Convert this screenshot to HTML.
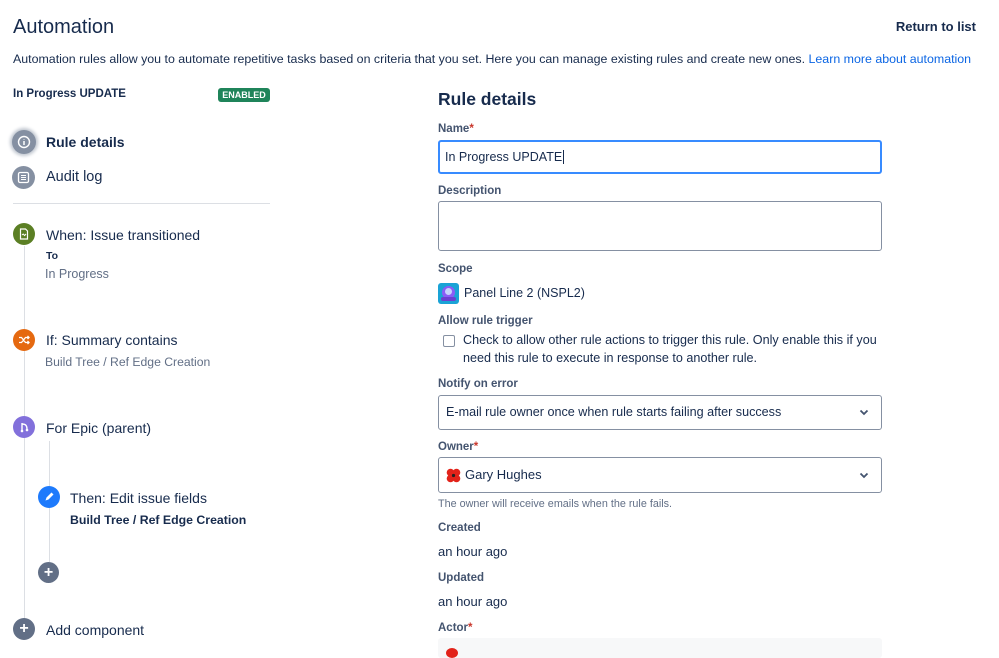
<!DOCTYPE html>
<html><head><meta charset="utf-8"><style>
*{margin:0;padding:0;box-sizing:border-box}
body{width:999px;height:652px;overflow:hidden;background:#fff;font-family:"Liberation Sans",sans-serif;color:#172b4d;position:relative}
.t{position:absolute;white-space:nowrap;line-height:20px}
.c{position:absolute;border-radius:50%;display:flex;align-items:center;justify-content:center}
.lbl{font-size:11.5px;font-weight:bold;color:#44546f}
.req{color:#c9372c}
.box{position:absolute;left:438px;width:444px;border:1px solid #8590a2;border-radius:3px;background:#fff}
.vl{position:absolute;width:1px;background:#dcdfe4}
</style></head><body>
<div class="t" style="left:13px;top:15px;font-size:20px;line-height:24px">Automation</div>
<div class="t" style="right:23px;top:17px;font-size:13px;font-weight:bold">Return to list</div>
<div class="t" style="left:13px;top:49px;font-size:12.4px">Automation rules allow you to automate repetitive tasks based on criteria that you set. Here you can manage existing rules and create new ones. <span style="color:#0c66e4">Learn more about automation</span></div>

<div class="t" style="left:13px;top:84px;font-size:11.5px;font-weight:bold;color:#172b4d">In Progress UPDATE</div>
<div style="position:absolute;left:218px;top:88px;width:52px;height:14px;background:#1f845a;color:#fff;border-radius:3px;font-size:9px;font-weight:bold;text-align:center;line-height:14px">ENABLED</div>

<div class="c" style="left:12px;top:130px;width:24px;height:24px;background:#8590a2;box-shadow:0 0 3px 2px #c1c7d0"><svg width="14" height="14" viewBox="0 0 14 14"><circle cx="7" cy="7" r="5.5" fill="none" stroke="#fff" stroke-width="1.4"/><path d="M7 6v4M7 4v.5" stroke="#fff" stroke-width="1.5"/></svg></div>
<div class="t" style="left:46px;top:132px;font-size:14px;font-weight:bold">Rule details</div>
<div class="c" style="left:12px;top:166px;width:23px;height:23px;background:#8590a2"><svg width="13" height="13" viewBox="0 0 13 13"><rect x="1.5" y="1.5" width="10" height="10" rx="1.5" fill="none" stroke="#fff" stroke-width="1.3"/><path d="M4 4.5h5M4 6.5h5M4 8.5h5" stroke="#fff" stroke-width="1"/></svg></div>
<div class="t" style="left:46px;top:167px;font-size:14.5px">Audit log</div>
<div style="position:absolute;left:13px;top:203px;width:257px;height:1px;background:#dcdfe4"></div>

<div class="vl" style="left:24px;top:246px;height:384px"></div>
<div class="c" style="left:13px;top:223px;width:22px;height:22px;background:#5b7f24"><svg width="12" height="12" viewBox="0 0 12 12"><path d="M2.5 1h5l2 2v8h-7z" fill="none" stroke="#fff" stroke-width="1.2"/><path d="M4 7l1.2-1 1.4 1.5L8 6" fill="none" stroke="#fff" stroke-width="1"/></svg></div>
<div class="t" style="left:46px;top:225px;font-size:14px">When: Issue transitioned</div>
<div class="t" style="left:46px;top:246px;font-size:10.5px;font-weight:bold">To</div>
<div class="t" style="left:45px;top:264px;font-size:12.5px;color:#626f86">In Progress</div>

<div class="c" style="left:13px;top:329px;width:22px;height:22px;background:#e56910"><svg width="12" height="12" viewBox="0 0 12 12"><path d="M1 3.5h2.5l4 5H11M1 8.5h2.5l4-5H11M9.5 2l1.5 1.5-1.5 1.5M9.5 7l1.5 1.5-1.5 1.5" fill="none" stroke="#fff" stroke-width="1.3"/></svg></div>
<div class="t" style="left:46px;top:330px;font-size:14px">If: Summary contains</div>
<div class="t" style="left:45px;top:352px;font-size:12.2px;color:#626f86">Build Tree / Ref Edge Creation</div>

<div class="c" style="left:13px;top:416px;width:22px;height:22px;background:#8270db"><svg width="12" height="12" viewBox="0 0 12 12"><path d="M4 2v8M4 3c4 0 5 2 5 5" fill="none" stroke="#fff" stroke-width="1.4"/><circle cx="4" cy="10" r="1.3" fill="#fff"/><circle cx="9" cy="9" r="1.3" fill="#fff"/></svg></div>
<div class="t" style="left:46px;top:418px;font-size:14px">For Epic (parent)</div>
<div class="vl" style="left:49px;top:441px;height:121px"></div>
<div class="c" style="left:38px;top:486px;width:22px;height:22px;background:#1d7afc"><svg width="12" height="12" viewBox="0 0 12 12"><path d="M2.5 9.5l1-3 5-5 2 2-5 5z" fill="#fff"/></svg></div>
<div class="t" style="left:70px;top:488px;font-size:14px">Then: Edit issue fields</div>
<div class="t" style="left:70px;top:510px;font-size:12.3px;font-weight:bold">Build Tree / Ref Edge Creation</div>
<div class="c" style="left:38px;top:562px;width:21px;height:21px;background:#626f86;color:#fff;font-size:16px;font-weight:bold;line-height:1">+</div>
<div class="c" style="left:13px;top:618px;width:22px;height:22px;background:#626f86;color:#fff;font-size:16px;font-weight:bold;line-height:1">+</div>
<div class="t" style="left:46px;top:620px;font-size:14px">Add component</div>

<div class="t" style="left:438px;top:87px;font-size:17.5px;line-height:24px;font-weight:bold">Rule details</div>
<div class="t lbl" style="left:438px;top:119px">Name<span class="req">*</span></div>
<div class="box" style="top:140px;height:34px;border:2px solid #388bff"><div class="t" style="left:5px;top:5px;font-size:12.5px">In Progress UPDATE<span style="border-left:1px solid #172b4d;margin-left:1px"></span></div></div>
<div class="t lbl" style="left:438px;top:181px">Description</div>
<div class="box" style="top:201px;height:50px"></div>
<div class="t lbl" style="left:438px;top:259px">Scope</div>
<div style="position:absolute;left:438px;top:283px;width:21px;height:21px;background:#1aa3d6;border-radius:3px;overflow:hidden"><div style="position:absolute;left:4px;top:3px;width:13px;height:13px;border-radius:50%;background:#8b5cf6"></div><div style="position:absolute;left:7px;top:5px;width:7px;height:7px;border-radius:50%;background:#c7d2fe"></div><div style="position:absolute;left:3px;top:14px;width:15px;height:4px;background:#6d3fd1;border-radius:2px"></div></div>
<div class="t" style="left:464px;top:283px;font-size:12.5px">Panel Line 2 (NSPL2)</div>
<div class="t lbl" style="left:438px;top:311px">Allow rule trigger</div>
<div style="position:absolute;left:443px;top:335px;width:12px;height:12px;border:1.5px solid #8590a2;border-radius:2px"></div>
<div class="t" style="left:463px;top:330px;font-size:12.6px">Check to allow other rule actions to trigger this rule. Only enable this if you</div>
<div class="t" style="left:463px;top:348px;font-size:12.6px">need this rule to execute in response to another rule.</div>
<div class="t lbl" style="left:438px;top:374px">Notify on error</div>
<div class="box" style="top:395px;height:35px"><div class="t" style="left:7px;top:6px;font-size:12.6px">E-mail rule owner once when rule starts failing after success</div><svg style="position:absolute;right:12px;top:13px" width="10" height="7" viewBox="0 0 10 7"><path d="M1.5 1.5l3.5 3.5 3.5-3.5" fill="none" stroke="#44546f" stroke-width="1.8"/></svg></div>
<div class="t lbl" style="left:438px;top:437px">Owner<span class="req">*</span></div>
<div class="box" style="top:457px;height:36px"><svg style="position:absolute;left:7px;top:10px" width="15" height="15" viewBox="0 0 15 15"><circle cx="4.5" cy="4.5" r="3.8" fill="#e2231a"/><circle cx="10.5" cy="4.5" r="3.8" fill="#e2231a"/><circle cx="4.5" cy="10.5" r="3.8" fill="#e2231a"/><circle cx="10.5" cy="10.5" r="3.8" fill="#e2231a"/><circle cx="7.5" cy="7.5" r="1.6" fill="#222"/></svg><div class="t" style="left:26px;top:7px;font-size:13px">Gary Hughes</div><svg style="position:absolute;right:12px;top:14px" width="10" height="7" viewBox="0 0 10 7"><path d="M1.5 1.5l3.5 3.5 3.5-3.5" fill="none" stroke="#44546f" stroke-width="1.8"/></svg></div>
<div class="t" style="left:438px;top:494px;font-size:10.8px;color:#626f86">The owner will receive emails when the rule fails.</div>
<div class="t lbl" style="left:438px;top:518px">Created</div>
<div class="t" style="left:438px;top:542px;font-size:13px">an hour ago</div>
<div class="t lbl" style="left:438px;top:568px">Updated</div>
<div class="t" style="left:438px;top:592px;font-size:13px">an hour ago</div>
<div class="t lbl" style="left:438px;top:618px">Actor<span class="req">*</span></div>
<div style="position:absolute;left:438px;top:638px;width:444px;height:20px;background:#f7f8f9;border-radius:3px"><div style="position:absolute;left:8px;top:10px;width:12px;height:10px;border-radius:50%;background:#e2231a"></div></div>
</body></html>
